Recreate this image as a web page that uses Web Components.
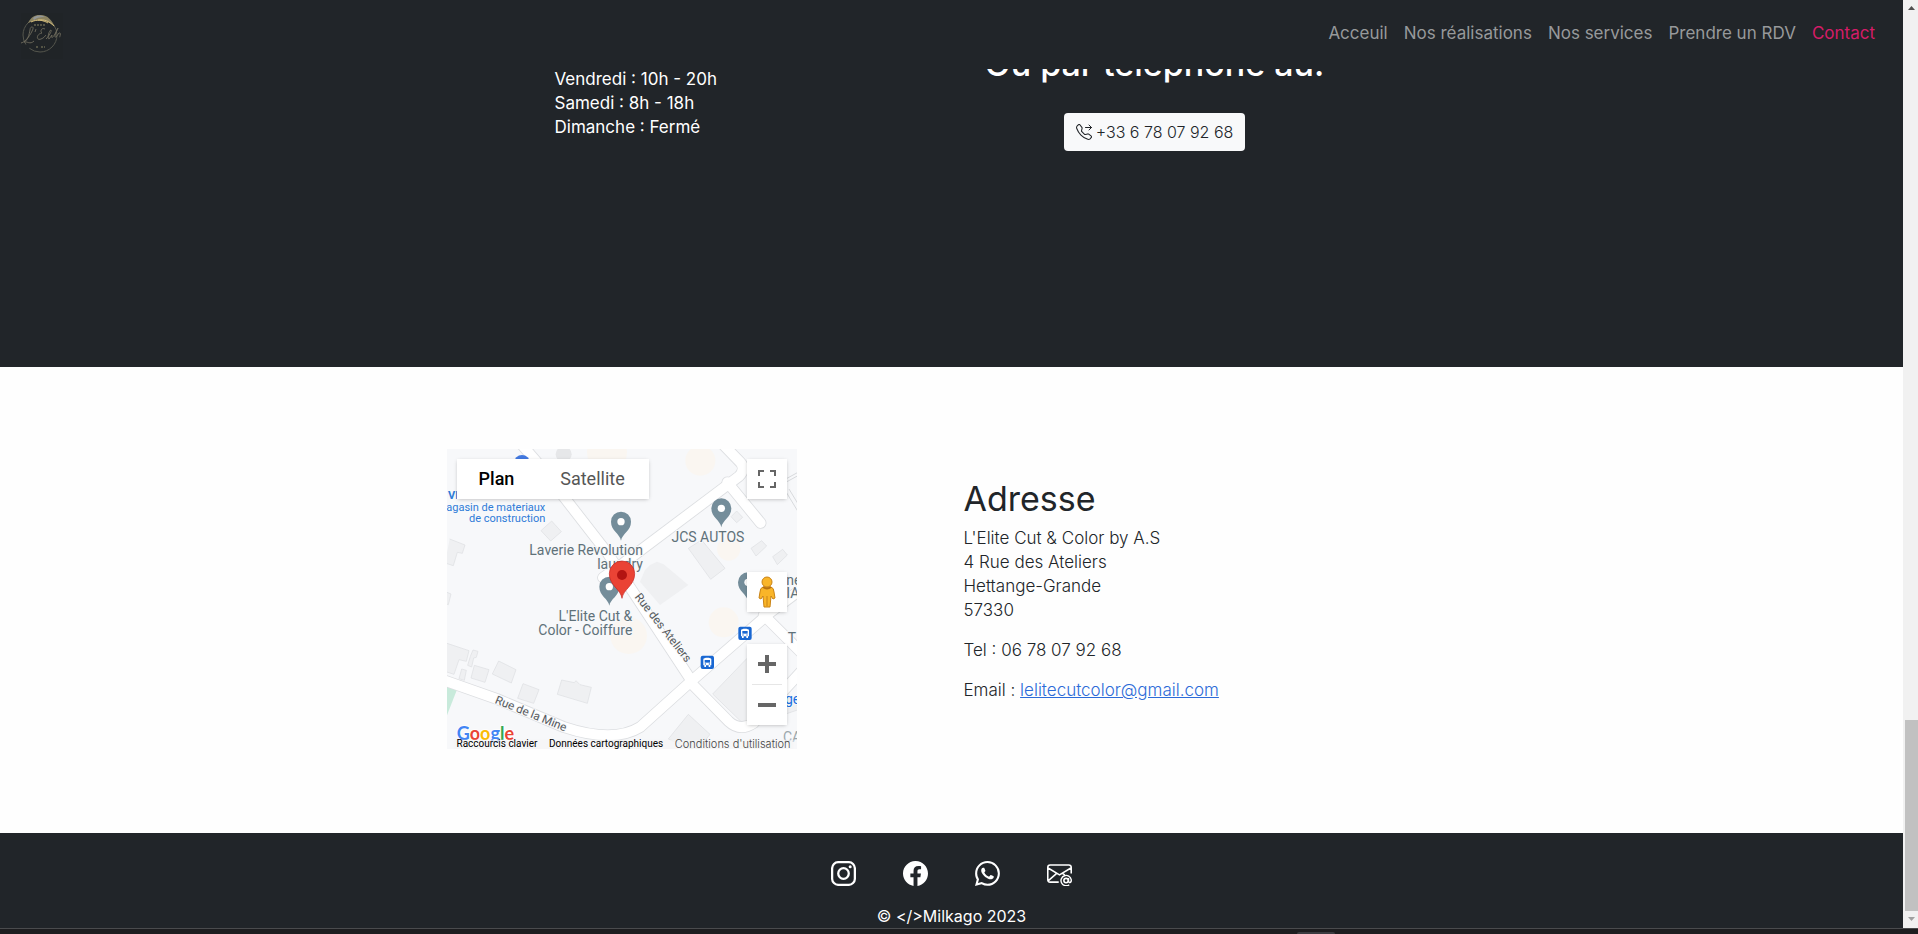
<!DOCTYPE html>
<html lang="fr">
<head>
<meta charset="utf-8">
<meta name="viewport" content="width=device-width, initial-scale=1">
<title>L'Elite Cut &amp; Color</title>
<style>
  html { height: 100%; }
  body {
    margin: 0; min-height: 100%; display: flex; flex-direction: column;
    font: 400 17px/24px Inter, "Open Sans", sans-serif; color: #212529; background: #fefefe;
  }
</style>
</head>
<body>
<salon-page></salon-page>
<window-edge></window-edge>

<template id="t-page">
  <style>
    :host { display: grid; grid-template-columns: minmax(0, 1fr) 15px; flex: 1; }
    .content { display: flex; flex-direction: column; }
    contact-hours { flex: 1; }
  </style>
  <div class="content">
    <nav-bar></nav-bar>
    <contact-hours></contact-hours>
    <contact-address></contact-address>
    <site-footer></site-footer>
  </div>
  <page-scroller></page-scroller>
</template>

<template id="t-nav">
  <style>
    :host { display: block; position: sticky; top: 0; z-index: 2; background: #212529; }
    nav { display: flex; justify-content: space-between; align-items: center; height: 69px; padding: 0 20px 0 16px; }
    ul { display: flex; margin: 0; padding: 0 0 4px; list-style: none; }
    a.link { display: block; padding: 8px; color: #97999b; text-decoration: none; }
    a.active { color: #d51c67; }
    .logo { display: block; line-height: 0; }
  </style>
  <nav>
    <a class="logo" href="#" aria-label="L'Elite">
      <svg width="48" height="48" viewBox="0 0 48 48">
        <rect x="5" y="2" width="42" height="46" fill="#202427"/>
        <circle cx="24" cy="24" r="17" fill="none" stroke="#55564d" stroke-width="1" stroke-dasharray="38 5 40 3"/>
        <path d="M12 12C15 6 19 4 23 4c8-1 13 5 16 12-4-4-8-6-13-6-5-1-9 0-14 2z" fill="#8b8362"/>
        <path d="M17 7c4-3 8-3 12-1-4 0-7 0-11 3z" fill="#929698"/>
        <path d="M22 9c6-1 11 1 16 6M15 11c6-3 12-2 17 1" fill="none" stroke="#d0b978"/>
        <path d="M5 32c5-1 10-9 12-14 1-3-3-3-3 1-1 5-2 10-6 12 3-1 6 3 10-1M20 18l-1 3M29 18c-4-2-5 3-3 4-6 1-6 8-1 6 3-1 4-3 5-4M30 28c3-3 6-8 5-9-2 0-4 9-2 9l3-4c-1 3 0 4 3-1l3-6c-3 6-4 10-2 9l3-4c3-1 0 5 1 4" fill="none" stroke="#6f6c5e" stroke-width=".9"/>
        <path d="M18 14h11M20 36h3m2 0h4" fill="none" stroke="#888465" stroke-dasharray="2 1"/>
      </svg>
    </a>
    <ul>
      <li><a class="link" href="#">Acceuil</a></li>
      <li><a class="link" href="#">Nos réalisations</a></li>
      <li><a class="link" href="#">Nos services</a></li>
      <li><a class="link" href="#">Prendre un RDV</a></li>
      <li><a class="link active" href="#">Contact</a></li>
    </ul>
  </nav>
</template>

<template id="t-hours">
  <style>
    :host { display: block; margin-top: -69px; background: #212529; color: #fff; }
    .row { display: grid; grid-template-columns: 1fr 388px; gap: 18px; width: min(794px, 100% - 32px); margin: 0 auto; padding: 45px 0 216px; }
    p { margin: 22px 0 0; }
    .call { text-align: center; }
    h2 { margin: 0 0 30px; font-size: 34px; line-height: 38px; font-weight: 500; white-space: nowrap; }
    button {
      display: inline-flex; align-items: center; gap: 4px; height: 38px; padding: 0 12px; border: 0; border-radius: 4px;
      background: #f8f9fa; color: #212529; font: inherit; font-size: 16px; font-weight: 300; vertical-align: top;
    }
  </style>
  <div class="row">
    <p>Vendredi : 10h - 20h<br>Samedi : 8h - 18h<br>Dimanche : Fermé</p>
    <div class="call">
      <h2>Ou par téléphone au:</h2>
      <button type="button">
        <svg width="16" height="16" viewBox="0 0 16 16" fill="currentColor" aria-hidden="true">
          <path d="M3.654 1.328a.678.678 0 0 0-1.015-.063L1.605 2.3c-.483.484-.661 1.169-.45 1.77a17.568 17.568 0 0 0 4.168 6.608 17.569 17.569 0 0 0 6.608 4.168c.601.211 1.286.033 1.77-.45l1.034-1.034a.678.678 0 0 0-.063-1.015l-2.307-1.794a.678.678 0 0 0-.58-.122l-2.19.547a1.745 1.745 0 0 1-1.657-.459L5.482 8.062a1.745 1.745 0 0 1-.46-1.657l.548-2.19a.678.678 0 0 0-.122-.58L3.654 1.328zM1.884.511a1.745 1.745 0 0 1 2.612.163L6.29 2.98c.329.423.445.974.315 1.494l-.547 2.19a.678.678 0 0 0 .178.643l2.457 2.457a.678.678 0 0 0 .644.178l2.189-.547a1.745 1.745 0 0 1 1.494.315l2.306 1.794c.829.645.905 1.87.163 2.611l-1.034 1.034c-.74.74-1.846 1.065-2.877.702a18.634 18.634 0 0 1-7.01-4.42 18.634 18.634 0 0 1-4.42-7.009c-.362-1.03-.037-2.137.703-2.877L1.885.511z"/>
          <path d="M9.500 3.500h6m-2.500-2.500l2.500 2.500l-2.500 2.500" fill="none" stroke="currentColor" stroke-linecap="round" stroke-linejoin="round"/>
        </svg>
        +33 6 78 07 92 68
      </button>
    </div>
  </div>
</template>

<template id="t-address">
  <style>
    :host { display: block; background: #fefefe; }
    .row { display: grid; grid-template-columns: 1fr 493px; align-items: center; width: min(1010px, 100% - 32px); margin: 0 auto; padding: 82px 0 84px; }
    address { font-style: normal; font-weight: 300; }
    h2 { margin: 0 0 8px; font-size: 34px; line-height: 38px; font-weight: 400; }
    p { margin: 0 0 16px; }
    a { color: #2c6bd8; }
  </style>
  <div class="row">
    <area-map></area-map>
    <address>
      <h2>Adresse</h2>
      <p>L'Elite Cut &amp; Color by A.S<br>4 Rue des Ateliers<br>Hettange-Grande<br>57330</p>
      <p>Tel : 06 78 07 92 68</p>
      <p>Email : <a href="mailto:lelitecutcolor@gmail.com">lelitecutcolor@gmail.com</a></p>
    </address>
  </div>
</template>

<template id="t-map">
  <style>
    :host { display: block; position: relative; width: 350px; height: 300px; overflow: hidden; font-family: Roboto, sans-serif; background: #f7f8fa; }
    svg { display: block; }
    button { padding: 0; border: 0; background: #fff; font: 400 18px/40px Roboto, sans-serif; color: #565656; }
    .types, .full, .peg, .zoom { position: absolute; background: #fff; box-shadow: 0 1px 4px -1px rgba(0,0,0,.3); }
    .types { left: 10px; top: 10px; display: flex; }
    .types button { width: 112px; }
    .types .on { width: 80px; color: #000; font-weight: 500; box-shadow: 1px 0 0 #f1f1f1; }
    .full, .peg, .zoom { right: 10px; width: 40px; }
    .full { top: 10px; }
    .peg { top: 123px; }
    .zoom { top: 195px; }
    .full button, .peg button, .zoom button { display: grid; place-items: center; width: 40px; height: 40px; }
    .zoom hr { margin: 0 5px; border: 0; height: 1px; background: #e6e6e6; }
    .legal { position: absolute; left: 10px; right: 6px; bottom: 0; display: flex; justify-content: space-between; font-size: 10px; line-height: 10px; color: #000; }
    .legal a { color: #444; text-decoration: none; font-family: Inter, sans-serif; font-size: 11px; font-weight: 300; }
    .legal button { font-size: 10px; line-height: 10px; color: #000; background: none; }
  </style>
  <svg width="350" height="300" viewBox="0 0 1050 900" role="img" aria-label="Carte">
    <defs>
      <g id="pin"><path d="M0 57C-3 36-30 28-30 0a30 30 0 0 1 60 0C30 28 3 36 0 57z" fill="#748d9a"/><circle r="11" fill="#fff"/></g>
      <g id="bus"><rect x="-20" y="-20" width="40" height="40" rx="6" fill="#1967d2"/><path d="M-12-9c0-6 24-6 24 0V9H9v5H4V9H-4v5H-9V9H-12z" fill="#fff"/><path d="M-8-7H8V1H-8z" fill="#1967d2"/><circle cx="-6" cy="5" r="2" fill="#1967d2"/><circle cx="6" cy="5" r="2" fill="#1967d2"/></g>
      <g id="roads">
        <path d="M822-20l58 60q17 20-4 42L530 342l-62 44"/>
        <path d="M841 100l100 122" />
        <path d="M210-30l60 70L480 310l250 380"/>
        <path d="M-20 690l170 60 200 84q150 50 230 0L740 690 970 490l120-90"/>
        <path d="M950 498l130 130"/>
        <path d="M735 705l110 112q35 32 75 5L1070 660"/>
      </g>
    </defs>
    <g fill="#fff5e6" opacity=".4"><circle cx="480" cy="10" r="60"/><circle cx="760" cy="35" r="45"/><circle cx="845" cy="300" r="35"/><circle cx="545" cy="560" r="55"/><circle cx="830" cy="520" r="45"/></g>
    <g fill="#eff0f2" stroke="#dcdee1" stroke-width="2">
      <path d="M314 216l29 32-32 28-29-31zM8 270l46 18-8 25-15-3-12 40-25-8M0 430l12 5-8 32-10-4"/>
      <path d="M0 583l66 22-8 32-22-5-15 44-30-10M78 603l15 4-5 18-8 2-6 27-12-5 8-27zM44 660l14 4-6 30-16-5z"/>
      <path d="M82 649l44 13-12 38-42-13zM155 636l52 26-14 40-57-27zM228 704l48 18-16 41-48-15zM344 693l38 8 5-6 12 12 34 8-12 48-90-27z"/>
      <path d="M724 298l40-25 70 85-43 33zM912 298l32-23 15 16-32 30zM977 323l30-22 14 17-30 29zM869 186l18 19-18 16-17-18z"/>
      <path d="M609 348l21-10 20 8 74 62-85 60-60-70 15-35z" stroke="none"/>
      <path d="M797 735L900 628 1060 780 900 835zM664 870l60-74 65 60-40 50z"/>
    </g>
    <path d="M0 708l33 6L0 799z" fill="#c8eadb"/>
    <circle cx="350" cy="16" r="24" fill="#e6e7e9"/>
    <use href="#roads" fill="none" stroke="#dcdee1" stroke-width="35" stroke-linecap="round" stroke-linejoin="round"/>
    <use href="#roads" fill="none" stroke="#fff" stroke-width="30" stroke-linecap="round" stroke-linejoin="round"/>
    <path d="M1020 88l40-22M1020 98l40-22M1018 130l40 66M1026 120l40 66" fill="none" stroke="#d8dadd" stroke-width="3"/>
    <circle cx="225" cy="42" r="24" fill="#4379e0"/>
    <use href="#pin" x="522" y="218"/><use href="#pin" x="823" y="178"/><use href="#pin" x="487" y="413"/><use href="#pin" x="903" y="400"/>
    <g font-family="Roboto, sans-serif" font-size="42" fill="#5f7179" stroke="#f7f8fa" stroke-width="6" paint-order="stroke">
      <text x="588" y="318" text-anchor="end">Laverie Revolution</text>
      <text x="588" y="360" text-anchor="end">laundry</text>
      <text x="892" y="278" text-anchor="end">JCS AUTOS</text>
      <text x="556" y="515" text-anchor="end">L'Elite Cut &amp;</text>
      <text x="556" y="557" text-anchor="end">Color - Coiffure</text>
      <text x="1018" y="408">ne</text><text x="1018" y="448">IA</text><text x="1022" y="582">T</text>
      <text x="1008" y="878" opacity=".6">CA</text>
      <text x="1014" y="764" fill="#1a6fe0">ge</text>
      <g fill="#2e7bd8" font-size="33">
        <text x="3" y="151" font-weight="700">VILLENEUVE</text>
        <text x="295" y="186" text-anchor="end">agasin de materiaux</text>
        <text x="295" y="219" text-anchor="end">de construction</text>
      </g>
      <g fill="#55585c" font-size="35">
        <text transform="translate(562 444) rotate(52)">Rue des Ateliers</text>
        <text transform="translate(142 762) rotate(22)">Rue de la Mine</text>
      </g>
    </g>
    <use href="#bus" x="894" y="553"/><use href="#bus" x="781" y="640"/>
    <path d="M525 448c-4-28-38-38-38-74a38 38 0 0 1 76 0c0 36-34 46-38 74z" fill="#ea4335" stroke="#c5221f" stroke-width="2"/><circle cx="525" cy="378" r="15" fill="#b31412"/>
    <text x="29" y="874" font-family="Lato, sans-serif" font-size="54" font-weight="700" stroke="#fff" stroke-width="5" paint-order="stroke"><tspan fill="#4285f4">G</tspan><tspan fill="#ea4335">o</tspan><tspan fill="#fbbc04">o</tspan><tspan fill="#4285f4">g</tspan><tspan fill="#34a853">l</tspan><tspan fill="#ea4335">e</tspan></text>
    <path d="M20 872H1040V900H20z" fill="#f5f5f5" opacity=".7"/>
  </svg>
  <div class="types"><button type="button" class="on">Plan</button><button type="button">Satellite</button></div>
  <div class="full"><button type="button" aria-label="Plein écran"><svg width="18" height="18" viewBox="0 0 18 18"><path d="M1 6V1h5M12 1h5v5M17 12v5h-5M6 17H1v-5" fill="none" stroke="#666" stroke-width="2"/></svg></button></div>
  <div class="peg"><button type="button" aria-label="Pegman"><svg width="18" height="32" viewBox="0 0 18 32"><path d="M5 11Q2 12 2 16l-1 6 2 1 2-3 1 11h6l1-11 2 3 2-1-1-6q0-4-3-5z" fill="#f9b529" stroke="#c98316"/><path d="M9 20v10" stroke="#c98316"/><circle cx="9" cy="6" r="5" fill="#f9b529" stroke="#c98316"/><path d="M5 11q4 3 8 0" fill="none" stroke="#b8710f" stroke-width="2"/></svg></button></div>
  <div class="zoom">
    <button type="button" aria-label="Zoom avant"><svg width="18" height="18" viewBox="0 0 18 18"><path d="M0 9h18M9 0v18" stroke="#666" stroke-width="4"/></svg></button>
    <hr>
    <button type="button" aria-label="Zoom arrière"><svg width="18" height="18" viewBox="0 0 18 18"><path d="M0 9h18" stroke="#666" stroke-width="4"/></svg></button>
  </div>
  <div class="legal"><button type="button">Raccourcis clavier</button><span>Données cartographiques</span><a href="#">Conditions d'utilisation</a></div>
</template>

<template id="t-footer">
  <style>
    :host { display: block; background: #212529; color: #fff; }
    footer { display: flex; flex-direction: column; align-items: center; gap: 18px; padding-top: 28px; }
    .social { display: flex; gap: 47px; }
    a { display: block; height: 25px; color: #fff; }
    p { margin: 0; font-size: 16px; }
  </style>
  <footer>
    <div class="social">
      <a href="#" aria-label="Instagram"><svg width="25" height="25" viewBox="0 0 16 16" fill="none" stroke="currentColor" stroke-width="1.45"><rect x=".72" y=".72" width="14.560" height="14.560" rx="4"/><circle cx="8" cy="8" r="3.380"/><circle cx="12.270" cy="3.730" r=".96" fill="currentColor" stroke="none"/></svg></a>
      <a href="#" aria-label="Facebook"><svg width="25" height="25" viewBox="0 0 16 16" fill="currentColor"><path d="M16 8.049c0-4.446-3.582-8.050-8-8.050C3.580 0-.002 3.603-.002 8.050c0 4.017 2.926 7.347 6.750 7.951v-5.625h-2.030V8.050H6.750V6.275c0-2.017 1.195-3.131 3.022-3.131.876 0 1.791.157 1.791.157v1.980h-1.009c-.993 0-1.303.621-1.303 1.258v1.510h2.218l-.354 2.326H9.250V16c3.824-.604 6.750-3.934 6.750-7.951z"/></svg></a>
      <a href="#" aria-label="WhatsApp"><svg width="25" height="25" viewBox="0 0 16 16" fill="currentColor"><path d="M13.601 2.326A7.854 7.854 0 0 0 7.994 0C3.627 0 .068 3.558.064 7.926c0 1.399.366 2.760 1.057 3.965L0 16l4.204-1.102a7.933 7.933 0 0 0 3.790.965h.004c4.368 0 7.926-3.558 7.930-7.930A7.898 7.898 0 0 0 13.600 2.326zM7.994 14.521a6.573 6.573 0 0 1-3.356-.920l-.240-.144-2.494.654.666-2.433-.156-.251a6.560 6.560 0 0 1-1.007-3.505c0-3.626 2.957-6.584 6.591-6.584a6.560 6.560 0 0 1 4.660 1.931 6.557 6.557 0 0 1 1.928 4.660c-.004 3.639-2.961 6.592-6.592 6.592zm3.615-4.934c-.197-.099-1.170-.578-1.353-.646-.182-.065-.315-.099-.445.099-.133.197-.513.646-.627.775-.114.133-.232.148-.430.050-.197-.100-.836-.308-1.592-.985-.590-.525-.985-1.175-1.103-1.372-.114-.198-.011-.304.088-.403.087-.088.197-.232.296-.346.100-.114.133-.198.198-.330.065-.134.034-.248-.015-.347-.050-.099-.445-1.076-.612-1.470-.160-.389-.323-.335-.445-.340-.114-.007-.247-.007-.380-.007a.729.729 0 0 0-.529.247c-.182.198-.691.677-.691 1.654 0 .977.710 1.916.810 2.049.098.133 1.394 2.132 3.383 2.992.470.205.840.326 1.129.418.475.152.904.129 1.246.080.380-.058 1.171-.480 1.338-.943.164-.464.164-.860.114-.943-.049-.084-.182-.133-.380-.232z"/></svg></a>
      <a href="#" aria-label="Email"><svg width="25" height="25" viewBox="0 0 16 16" fill="none" stroke="currentColor"><path d="M15.500 8V4A1.500 1.500 0 0 0 14 2.500H2A1.500 1.500 0 0 0 .5 4v8A1.500 1.500 0 0 0 2 13.500h5.500M.7 4.500L8 8.900l7.300-4.400M.7 12.700l5.500-4.800M9.800 7.900l1.600 1"/><circle cx="12.200" cy="12.500" r="1.400"/><path d="M13.800 10.900v2q.2 1.200 1.200.8.700-.6.500-1.800a3.300 3.300 0 1 0-1.300 3.300" stroke-width=".9"/></svg></a>
    </div>
    <p>© &lt;/&gt;Milkago 2023</p>
  </footer>
</template>

<template id="t-scroller">
  <style>
    :host { display: flex; flex-direction: column; align-items: center; justify-content: space-between; background: #f1f1f1; }
    svg { display: block; flex: none; }
    .track { display: flex; flex-direction: column; flex: 1; align-self: stretch; padding-left: 2px; }
    .before { flex: 703; }
    .thumb { flex: 191; background: #c1c1c1; }
  </style>
  <svg width="15" height="17" viewBox="0 0 15 17"><path d="M5 10h7L8.500 6z" fill="#505050"/></svg>
  <div class="track"><div class="before"></div><div class="thumb"></div></div>
  <svg width="15" height="17" viewBox="0 0 15 17"><path d="M5 6h7L8.500 10z" fill="#a0a0a0"/></svg>
</template>

<template id="t-edge">
  <style>
    :host { display: block; box-sizing: border-box; height: 6px; padding: 3px 0 0; border-top: 1px solid #4a4b4d; background: #1d1d1f; }
    div { width: 38px; height: 2px; margin-left: calc(67% + 12px); border-radius: 2px 2px 0 0; background: #3b3b40; }
  </style>
  <div></div>
</template>

<script>
  const define = (name, templateId) => customElements.define(name, class extends HTMLElement {
    constructor() {
      super();
      this.attachShadow({ mode: "open" }).append(document.getElementById(templateId).content.cloneNode(true));
    }
  });
  define("nav-bar", "t-nav");
  define("contact-hours", "t-hours");
  define("area-map", "t-map");
  define("contact-address", "t-address");
  define("site-footer", "t-footer");
  define("page-scroller", "t-scroller");
  define("window-edge", "t-edge");
  define("salon-page", "t-page");
</script>
</body>
</html>
